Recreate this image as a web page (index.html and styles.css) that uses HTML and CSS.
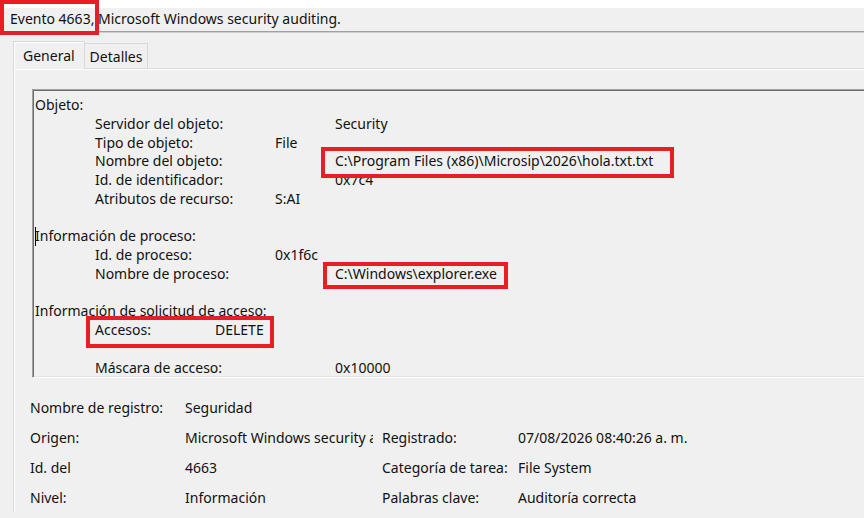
FILE: index.html
```html
<!DOCTYPE html>
<html>

<head>
    <title>Evento 4663</title>
    <link rel="stylesheet" href="styles.css">
</head>

<body>
    <div class="top-strip"></div>
    <div class="header"><span class="mark mark-title">Evento 4663,</span> Microsoft Windows security auditing.</div>

    <div class="tabs">
        <div class="tab active">General</div>
        <div class="tab">Detalles</div>
    </div>

    <div class="page">
        <div class="message">
            <div class="line">Objeto:</div>
            <div class="line sub"><span class="w240">Servidor del objeto:</span>Security</div>
            <div class="line sub"><span class="w180">Tipo de objeto:</span>File</div>
            <div class="line sub"><span class="w240">Nombre del objeto:</span><span class="mark mark-path">C:\Program Files (x86)\Microsip\2026\hola.txt.txt</span></div>
            <div class="line sub"><span class="w240">Id. de identificador:</span>0x7c4</div>
            <div class="line sub"><span class="w180">Atributos de recurso:</span>S:AI</div>
            <div class="line"></div>
            <div class="line"><span class="caret"></span>Información de proceso:</div>
            <div class="line sub"><span class="w180">Id. de proceso:</span>0x1f6c</div>
            <div class="line sub"><span class="w240">Nombre de proceso:</span><span class="mark mark-exe">C:\Windows\explorer.exe</span></div>
            <div class="line"></div>
            <div class="line">Información de solicitud de acceso:</div>
            <div class="line sub"><span class="mark mark-access"><span class="w120">Accesos:</span>DELETE</span></div>
            <div class="line"></div>
            <div class="line sub"><span class="w240">Máscara de acceso:</span>0x10000</div>
        </div>

        <div class="props">
            <div>Nombre de registro:</div>
            <div class="clip">Seguridad</div>
            <div></div>
            <div></div>

            <div>Origen:</div>
            <div class="clip">Microsoft Windows security auditing.</div>
            <div>Registrado:</div>
            <div>07/08/2026 08:40:26 a. m.</div>

            <div>Id. del</div>
            <div class="clip">4663</div>
            <div>Categoría de tarea:</div>
            <div>File System</div>

            <div>Nivel:</div>
            <div class="clip">Información</div>
            <div>Palabras clave:</div>
            <div>Auditoría correcta</div>
        </div>
    </div>
</body>

</html>
```

FILE: styles.css
```css
body {
    margin: 0;
    padding: 0;
    background-color: #f0f0f0;
    font-family: "Noto Sans", "Open Sans", sans-serif;
    font-size: 14px;
    color: #111;
    overflow: hidden;
    height: 518px;
}

.top-strip {
    height: 8px;
    background-color: #fff;
}

.header {
    height: 23px;
    line-height: 22px;
    padding-left: 10px;
    font-size: 14px;
    border-bottom: 1px solid #a0a0a0;
    box-shadow: 0 1px 0 #cfcfcf;
    white-space: nowrap;
}

/* red annotation frames drawn around a piece of text */
.mark {
    position: relative;
    display: inline-block;
}

.mark::after {
    content: "";
    position: absolute;
    border: 4px solid #e61e25;
}

.mark-title::after {
    top: -8px;
    bottom: -5px;
    left: -10px;
    right: -5px;
}

.mark-path::after {
    top: -5px;
    bottom: -7px;
    left: -14px;
    right: -21px;
}

.mark-exe::after {
    top: -3px;
    bottom: -5px;
    left: -12px;
    right: -11px;
}

.mark-access::after {
    top: -5px;
    bottom: -8px;
    left: -9px;
    right: -10px;
}

.tabs {
    display: flex;
    align-items: flex-end;
    margin-top: 9px;
    padding-left: 13px;
    height: 27px;
}

.tab {
    height: 25px;
    line-height: 25px;
    padding: 0 5px 0 5px;
    margin-left: -1px;
    border: 1px solid #d9d9d9;
    border-bottom: none;
    box-sizing: border-box;
}

.tab.active {
    height: 28px;
    line-height: 28px;
    padding: 0 9px 0 9px;
    margin-left: 0;
    margin-bottom: -1px;
    background-color: #f0f0f0;
    box-shadow: inset 1px 1px 0 #fff;
    position: relative;
    z-index: 1;
}

.page {
    margin-left: 13px;
    border-left: 1px solid #d9d9d9;
    border-top: 1px solid #d9d9d9;
    box-shadow: inset 1px 1px 0 #fff;
    padding: 20px 0 0 18px;
}

.message {
    height: 281px;
    padding: 6px 0 0 2px;
    border-top: 1px solid #a0a0a0;
    border-left: 1px solid #a0a0a0;
    border-bottom: 1px solid #fff;
    box-shadow: inset 1px 1px 0 #6e6e6e, 0 -1px 0 #e3e3e3 inset;
}

.line {
    height: 18.78px;
    line-height: 18.78px;
    white-space: nowrap;
}

.line.sub {
    padding-left: 60px;
}

.w120,
.w180,
.w240 {
    display: inline-block;
}

.w120 {
    width: 120px;
}

.w180 {
    width: 180px;
}

.w240 {
    width: 240px;
}

.caret {
    display: inline-block;
    width: 1px;
    height: 19px;
    margin-right: -1px;
    vertical-align: top;
    background-color: #000;
}

.props {
    display: grid;
    grid-template-columns: 155px 197px 136px 1fr;
    grid-auto-rows: 30px;
    align-items: center;
    margin-top: 14px;
    margin-left: -2px;
}

.props div {
    white-space: nowrap;
}

.props .clip {
    overflow: hidden;
    margin-right: 9px;
}
```
